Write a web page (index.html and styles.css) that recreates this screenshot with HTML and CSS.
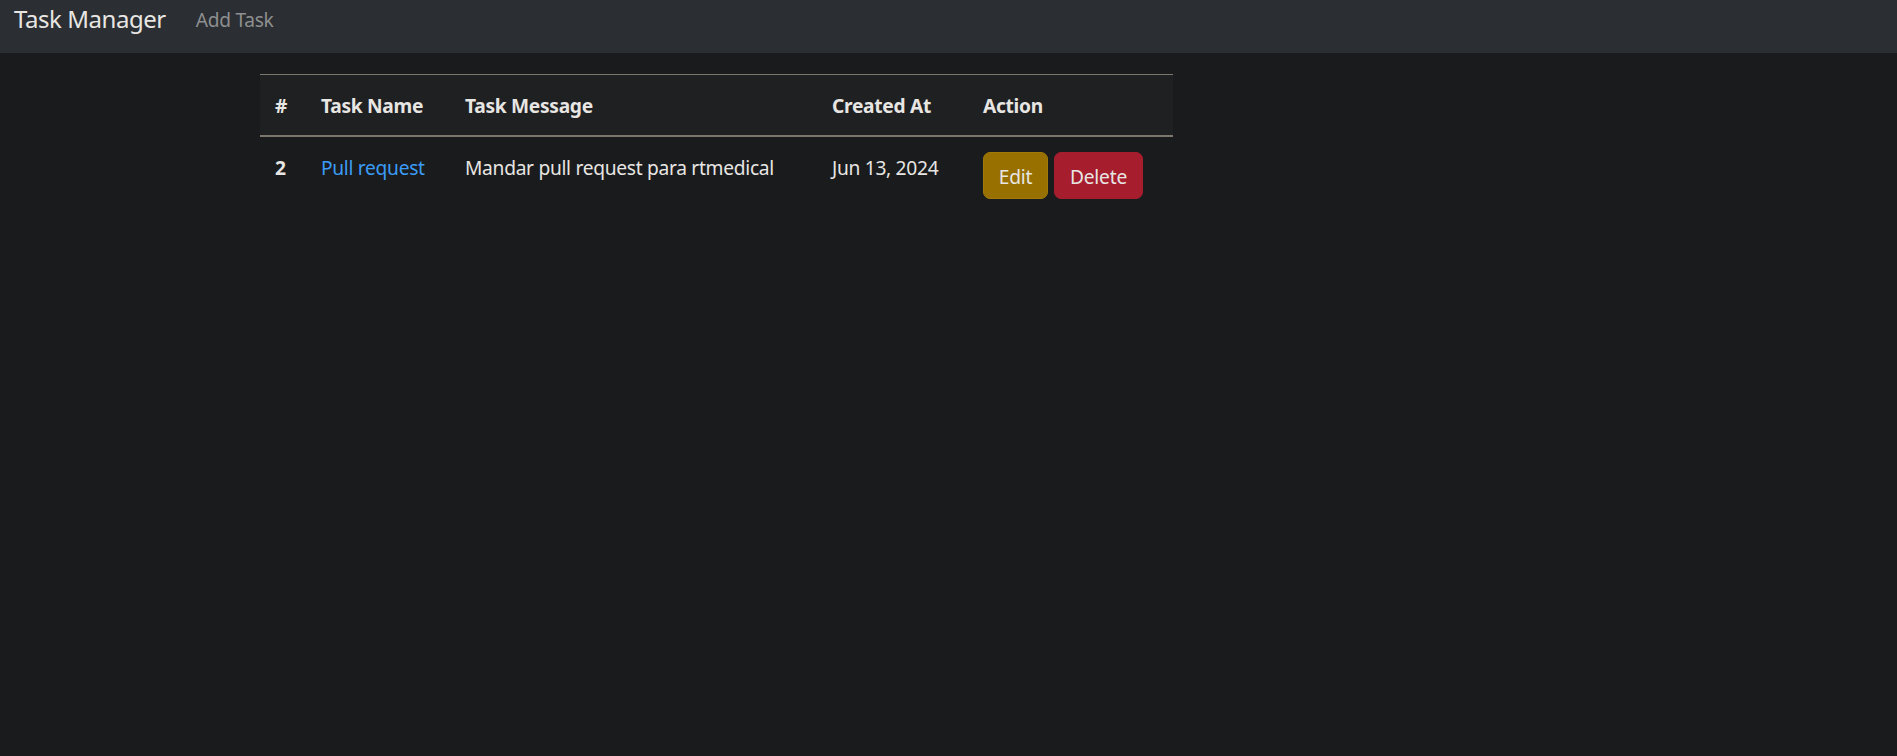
FILE: index.html
```html
<!DOCTYPE html>
<html lang="en">
<head>
<meta charset="utf-8">
<title>Task Manager</title>
<link rel="stylesheet" href="styles.css">
</head>
<body>
<nav class="navbar">
  <a class="brand" href="#">Task Manager</a>
  <a class="nav-link" href="#">Add Task</a>
</nav>
<main class="content">
  <table class="tasks">
    <colgroup>
      <col class="c-num">
      <col class="c-name">
      <col class="c-msg">
      <col class="c-date">
      <col class="c-act">
    </colgroup>
    <thead>
      <tr>
        <th>#</th>
        <th>Task Name</th>
        <th>Task Message</th>
        <th>Created At</th>
        <th>Action</th>
      </tr>
    </thead>
    <tbody>
      <tr>
        <th>2</th>
        <td><a class="task-link" href="#">Pull request</a></td>
        <td>Mandar pull request para rtmedical</td>
        <td>Jun 13, 2024</td>
        <td class="actions">
          <button class="btn btn-edit">Edit</button>
          <button class="btn btn-delete">Delete</button>
        </td>
      </tr>
    </tbody>
  </table>
</main>
</body>
</html>
```

FILE: styles.css
```css
html, body {
  margin: 0;
  padding: 0;
}
body {
  background: #1a1b1d;
  color: #e8e6e3;
  font-family: "Segoe UI", "Noto Sans", "Open Sans", sans-serif;
  font-size: 19.2px;
  line-height: 29px;
  letter-spacing: -0.3px;
  min-height: 756px;
}
.navbar {
  height: 53px;
  box-sizing: border-box;
  background: #2b2e32;
  display: flex;
  align-items: flex-start;
  padding: 1px 0 0 14px;
}
.brand {
  color: #e8e6e3;
  text-decoration: none;
  font-size: 24px;
  line-height: 36px;
  letter-spacing: -0.45px;
  margin-right: 20px;
}
.nav-link {
  color: #8e8f90;
  text-decoration: none;
  font-size: 19.2px;
  line-height: 36px;
  padding: 1px 10px 0;
}
.content {
  padding: 21px 0 0 260px;
}
.tasks {
  width: 913px;
  border-collapse: collapse;
  table-layout: fixed;
}
.c-num { width: 46px; }
.c-name { width: 144px; }
.c-msg { width: 367px; }
.c-date { width: 151px; }
.c-act { width: 205px; }
.tasks th,
.tasks td {
  padding: 15px 15px;
  text-align: left;
  vertical-align: top;
  white-space: nowrap;
}
.tasks thead tr {
  background: #1f2022;
  border-top: 1px solid #7c766e;
  border-bottom: 2px solid #7c766e;
}
.tasks thead th {
  font-weight: 700;
  height: 30px;
  padding-top: 16px;
  padding-bottom: 14px;
}
.tasks tbody th,
.tasks tbody td {
  padding-top: 16px;
}
.tasks tbody th {
  font-weight: 700;
}
.tasks tbody td.actions {
  padding-top: 15px;
}
.task-link {
  color: #3b9bf5;
  text-decoration: none;
}
.actions {
  display: flex;
  gap: 6px;
}
.btn {
  font-family: inherit;
  font-size: 19.2px;
  letter-spacing: -0.2px;
  line-height: 29px;
  height: 47px;
  padding: 2px 0 0;
  border-radius: 7px;
  color: #e8e6e3;
  cursor: pointer;
}
.btn-edit {
  background: #987000;
  border: 1px solid #a27a08;
  width: 65px;
}
.btn-delete {
  background: #a61d2e;
  border: 1px solid #a61d2e;
  width: 89px;
}
```
